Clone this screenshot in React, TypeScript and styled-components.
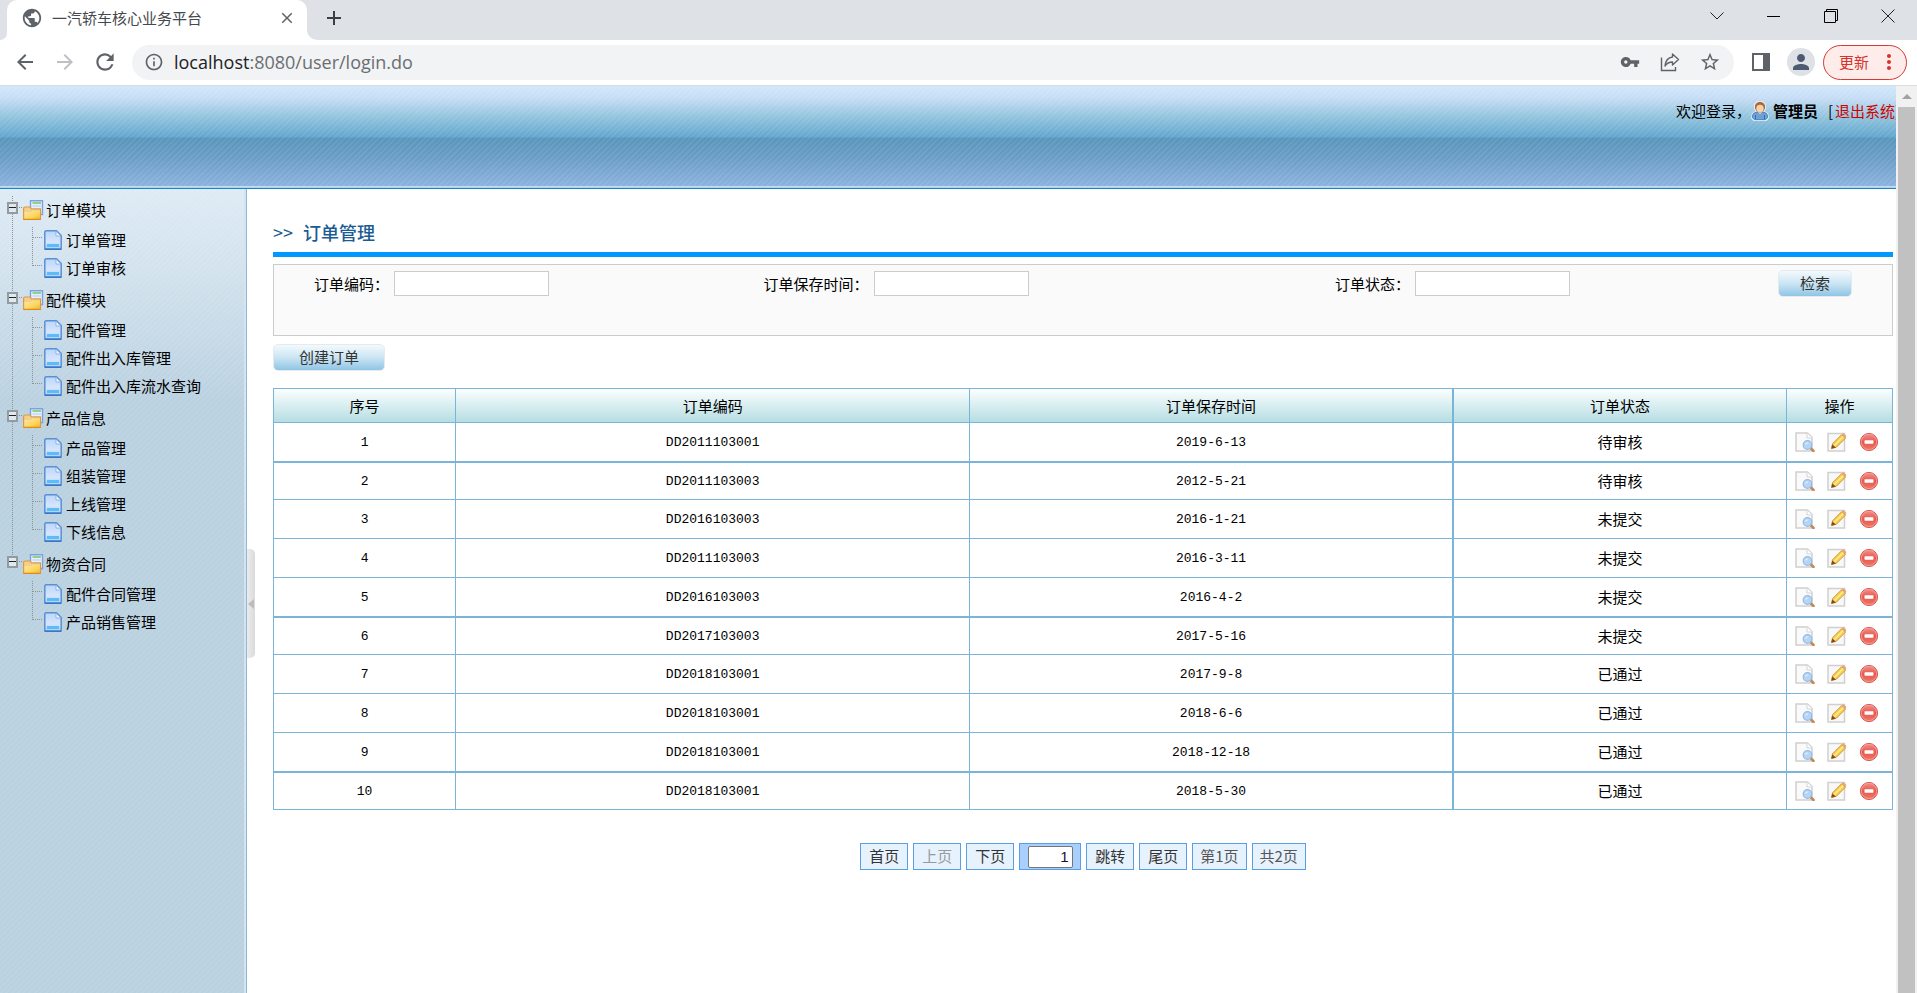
import React from 'react';
import styled, { createGlobalStyle } from 'styled-components';
import {
  MdAdd,
  MdArrowBack,
  MdArrowForward,
  MdClose,
  MdInfoOutline,
  MdMoreVert,
  MdPerson,
  MdPublic,
  MdRefresh,
  MdStarBorder,
  MdVpnKey,
} from 'react-icons/md';

const GlobalStyle = createGlobalStyle`
  *, *::before, *::after { box-sizing: border-box; }
  body {
    margin: 0;
    background: #fff;
    color: #000;
    font-family: "Noto Sans CJK SC", sans-serif;
    font-size: 15px;
    line-height: 20px;
  }
  button, input { font: inherit; color: inherit; }
  button { cursor: pointer; padding: 0; border: 0; background: none; }
  svg { display: block; flex: none; }
  ul { list-style: none; margin: 0; padding: 0; }
`;

const UI_FONT = '"Open Sans", "Noto Sans CJK SC", sans-serif';
const STRIPES =
  'repeating-linear-gradient(135deg, rgba(255,255,255,0.07) 0 2px, rgba(255,255,255,0) 2px 4px)';

/* ---------- browser window ---------- */

const Window = styled.div`
  height: 100vh;
  display: flex;
  flex-direction: column;
  overflow: hidden;
`;

const TabStrip = styled.div`
  display: flex;
  height: 40px;
  flex: none;
  background: #fff;
  font-family: ${UI_FONT};
`;

const StripEdge = styled.div`
  width: 7px;
  background: #dee1e6;
  border-bottom-right-radius: 7px;
`;

const TabHolder = styled.div`
  width: 300px;
  background: #dee1e6;
`;

const Tab = styled.div`
  display: flex;
  align-items: center;
  height: 40px;
  padding: 0 12px 4px 14px;
  gap: 9px;
  background: #fff;
  border-radius: 10px 10px 0 0;
  color: #45494d;
  svg { color: #5f6368; }
`;

const TabTitle = styled.span`
  flex: 1;
`;

const StripRest = styled.div`
  flex: 1;
  display: flex;
  align-items: center;
  justify-content: space-between;
  padding: 0 17px 4px 15px;
  background: #dee1e6;
  border-bottom-left-radius: 10px;
`;

const WindowButtons = styled.div`
  display: flex;
  gap: 33px;
  padding-bottom: 5px;
`;

const IconButton = styled.button<{ $size?: number }>`
  display: flex;
  align-items: center;
  justify-content: center;
  width: ${(p) => p.$size ?? 24}px;
  height: ${(p) => p.$size ?? 24}px;
  color: #3c4043;
`;

const Toolbar = styled.div`
  display: flex;
  align-items: center;
  flex: none;
  height: 46px;
  padding: 0 10px 1px 13px;
  border-bottom: 1px solid #dadce0;
  background: #fff;
  color: #5f6368;
  font-family: ${UI_FONT};
  ${IconButton} { color: #5f6368; }
  ${IconButton}:disabled { color: #bdc1c6; }
`;

const NavButtons = styled.div`
  display: flex;
  gap: 16px;
`;

const AddressBar = styled.div`
  flex: 1;
  display: flex;
  align-items: center;
  height: 35px;
  margin: 0 18px 0 15px;
  padding: 0 12px;
  border-radius: 18px;
  background: #f1f3f4;
`;

const Url = styled.span`
  flex: 1;
  margin-left: 10px;
  font-size: 18px;
  line-height: 24px;
  color: #6a6e72;
  b { font-weight: 400; color: #202124; }
`;

const AddressActions = styled.div`
  display: flex;
  gap: 16px;
`;

const Avatar = styled.button`
  display: flex;
  align-items: center;
  justify-content: center;
  width: 28px;
  height: 28px;
  margin: 0 8px 0 17px;
  border-radius: 50%;
  background: #dee1e6;
  color: #4d5b72;
`;

const UpdateButton = styled.button`
  display: flex;
  align-items: center;
  gap: 8px;
  height: 35px;
  width: 84px;
  padding-left: 15px;
  border: 1px solid #d33a33;
  border-radius: 18px;
  background: #fdecea;
  color: #d6332b;
`;

const Viewport = styled.div`
  flex: 1;
  display: flex;
  min-height: 0;
`;

const Page = styled.div`
  flex: 1;
  min-width: 0;
  display: flex;
  flex-direction: column;
`;

const Scrollbar = styled.div`
  width: 21px;
  padding: 0 2px;
  display: flex;
  flex-direction: column;
  background: #f1f1f1;
`;

const ScrollArrow = styled.div`
  height: 21px;
  display: flex;
  align-items: center;
  justify-content: center;
`;

const ScrollThumb = styled.div`
  flex: 1;
  background: #c1c1c1;
`;

/* ---------- application frame ---------- */

const Banner = styled.header`
  flex: none;
  height: 103px;
  border-bottom: 1px solid #1d84c6;
  background:
    linear-gradient(#cfe3ee, #a5cdea) bottom / 100% 2px no-repeat,
    ${STRIPES},
    linear-gradient(#cfe8fa 0, #c6ddf5 12px, #8fc2dc 32px, #62a6cf 51px, #5895bb 52px, #6a9dc5 72px, #8bb2de 100px);
  overflow: hidden;
`;

const UserInfo = styled.div`
  width: 220px;
  margin-left: auto;
  padding-top: 15px;
  display: flex;
  align-items: center;
  white-space: nowrap;
  svg { margin-right: 4px; }
`;

const Logout = styled.a`
  color: #d00000;
  text-decoration: none;
`;

const Bracket = styled.span`
  margin: 0 2px 0 10px;
`;

const Body = styled.div`
  flex: 1;
  display: flex;
  min-height: 0;
`;

const Sidebar = styled.nav`
  width: 247px;
  flex: none;
  padding-top: 7px;
  border-right: 1px solid #8fb8da;
  background:
    linear-gradient(#d3e3ef, #d3e3ef) right / 2px 100% no-repeat,
    ${STRIPES},
    linear-gradient(#deebf5 0, #cfe0ec 100px, #bad1e0 210px, #bad1e0 100%);
`;

const DOTS_V = 'repeating-linear-gradient(#8c949a 0 1px, transparent 1px 2px)';
const DOTS_H = 'repeating-linear-gradient(90deg, #8c949a 0 1px, transparent 1px 2px)';

const Group = styled.li`
  padding: 3px 0 3px;
  background: ${DOTS_V} 12px 0 / 1px 100% no-repeat;
  &:last-child { background-size: 1px 12px; }
`;

const GroupHeader = styled.div`
  display: flex;
  align-items: center;
  height: 22px;
  margin-bottom: 6px;
  padding-left: 7px;
`;

const Toggle = styled.button`
  width: 11px;
  height: 12px;
  margin-bottom: 5px;
  display: flex;
  align-items: center;
  justify-content: center;
  border: 2px solid #939ba1;
  background: #dfe9f0;
  &::before { content: ""; width: 7px; height: 1px; flex: none; background: #222; }
`;

const Stub = styled.span`
  width: 4px;
  height: 1px;
  margin: 0 0 5px 1px;
  background: ${DOTS_H};
`;

const GroupName = styled.span`
  margin-left: 2px;
`;

const Leaf = styled.li`
  display: flex;
  height: 28px;
  padding: 3px 0 0 44px;
  background:
    ${DOTS_V} 32px 0 / 1px 100% no-repeat,
    ${DOTS_H} 33px 10px / 10px 1px no-repeat;
  &:last-child {
    background-size: 1px 11px, 10px 1px;
  }
`;

const LeafLink = styled.a`
  display: flex;
  align-items: center;
  gap: 4px;
  height: 20px;
  color: #000;
  text-decoration: none;
`;

const SplitHandle = styled.button`
  align-self: flex-start;
  flex: none;
  width: 8px;
  height: 109px;
  margin-top: 360px;
  display: flex;
  align-items: center;
  border-radius: 0 5px 5px 0;
  background: linear-gradient(90deg, #ececec, #dadada);
`;

/* ---------- orders page ---------- */

const Main = styled.main`
  flex: 1;
  min-width: 0;
  padding: 31px 3px 0 18px;
`;

const Title = styled.h1`
  display: flex;
  align-items: center;
  gap: 10px;
  margin: 0;
  padding-bottom: 8px;
  height: 37px;
  border-bottom: 5px solid #0099ff;
  color: #1a5b93;
  font-size: 18px;
  font-weight: 500;
  line-height: 24px;
  span { font-weight: 400; }
`;

const SearchForm = styled.form`
  display: grid;
  grid-template-columns: 315fr 614fr 499fr 190fr;
  align-items: start;
  justify-items: center;
  height: 72px;
  margin-top: 7px;
  padding-top: 5px;
  border: 1px solid #ccc;
  background: #fafafa;
`;

const Field = styled.label`
  display: flex;
  align-items: center;
  gap: 5px;
  padding-top: 1px;
  white-space: nowrap;
`;

const FieldInput = styled.input`
  width: 155px;
  height: 25px;
  padding: 0 4px;
  border: 1px solid #ccc;
  background: #fff;
`;

const GlossyButton = styled.button<{ $width: number }>`
  display: block;
  width: ${(p) => p.$width}px;
  height: 27px;
  padding-bottom: 2px;
  border: 1px solid #e4ebef;
  border-radius: 5px;
  background: linear-gradient(#f3fafd 0, #cbe5f3 50%, #8fc5e5 100%);
  color: #333;
`;

const SearchCell = styled.div`
  justify-self: end;
  margin-right: 40px;
`;

const Actions = styled.div`
  margin: 8px 0 17px;
`;

const OrderTable = styled.table`
  width: 100%;
  table-layout: fixed;
  border-collapse: collapse;
  text-align: center;
  th, td { padding: 0; border: 1px solid #7ab5d9; }
  th:nth-child(4), td:nth-child(4) { border-left-width: 2px; }
`;

const HeadRow = styled.tr`
  height: 34px;
  background: linear-gradient(#fcfefe, #b3dde2);
  th { font-weight: 400; }
`;

const OrderRow = styled.tr`
  height: 39px;
  &:nth-child(4n + 2) { height: 38px; }
  &:nth-child(4n + 1) td { border-bottom-width: 2px; }
`;

const CodeCell = styled.td`
  && { padding-top: 2px; }
  font-family: "Liberation Mono", monospace;
  font-size: 13px;
`;

const RowActions = styled.div`
  display: flex;
  justify-content: center;
  gap: 12px;
  padding-right: 5px;
`;

const Pager = styled.div`
  display: flex;
  justify-content: center;
  gap: 5px;
  margin-top: 33px;
`;

const pagerBox = `
  height: 27px;
  border: 1px solid #5b9fe3;
  background: #e6f2fe;
`;

const PageButton = styled.button`
  ${pagerBox}
  width: 48px;
  padding-bottom: 1px;
  color: #333;
  &:disabled { color: #999; }
`;

const PageInfo = styled.span`
  ${pagerBox}
  display: flex;
  align-items: center;
  padding: 0 7px 1px;
  color: #555;
`;

const PageJump = styled.label`
  ${pagerBox}
  display: flex;
  align-items: center;
  justify-content: center;
  width: 62px;
  background: #a9d0fd;
`;

const PageInput = styled.input`
  width: 45px;
  height: 22px;
  padding: 0 3px;
  border: 1px solid #767676;
  border-radius: 2px;
  background: #fff;
  text-align: right;
  font-family: "Liberation Sans", sans-serif;
  color: #1a1040;
`;

/* ---------- drawings ---------- */

const ShareIcon = () => (
  <svg width="20" height="20" viewBox="0 0 20 20" fill="none" stroke="#5f6368" strokeWidth="1.4">
    <path d="M1.5 5.5V18.500H15.500V15" />
    <path d="M12.500 2 18.500 7.500 12.500 13V10C9 10 7 11 5 14 5.500 9 8 5.500 12.500 5Z" strokeLinejoin="round" />
  </svg>
);

const PanelIcon = () => (
  <svg width="18" height="18" viewBox="0 0 18 18">
    <path fill="#5f6368" fillRule="evenodd" d="M0 0H18V18H0ZM2 2V16H11V2Z" />
  </svg>
);

const FolderIcon = () => (
  <svg width="21" height="21" viewBox="0 0 21 21">
    <defs>
      <linearGradient id="folderFill" x1="0" y1="0" x2="1" y2="1">
        <stop offset="0" stopColor="#fbe7b0" />
        <stop offset="0.6" stopColor="#fbd75a" />
        <stop offset="1" stopColor="#f0b63e" />
      </linearGradient>
    </defs>
    <path d="M7.500 0.700H19.500V14.500H7.500Z" fill="#e8f0fd" stroke="#7aa2e2" strokeWidth="1.400" />
    <path d="M9.500 3H18" stroke="#8fd08a" strokeWidth="2" />
    <path d="M9.500 6H18M9.500 8.500H18" stroke="#b9cdea" />
    <path d="M0.600 8.500Q0.600 7 2 7H7L8.500 9H17.500V19.400H0.600Z" fill="#f5cf8a" stroke="#df9a3c" strokeWidth="1.200" />
    <path d="M1.500 12H8L9.500 10.500H17V19H1.500Z" fill="url(#folderFill)" />
    <path d="M0.600 19.400H17.500" stroke="#e08a22" strokeWidth="1.300" />
  </svg>
);

const FileIcon = () => (
  <svg width="18" height="20" viewBox="0 0 18 20">
    <defs>
      <linearGradient id="fileFill" x1="0" y1="0" x2="0" y2="1">
        <stop offset="0" stopColor="#bcd6fa" />
        <stop offset="0.600" stopColor="#d6e5fd" />
        <stop offset="1" stopColor="#a9d2fb" />
      </linearGradient>
    </defs>
    <path d="M1.800 0.800H12.500L17.200 5.500V19.200H0.800V1.800Z" fill="url(#fileFill)" stroke="#5a90d6" strokeWidth="1.500" strokeLinejoin="round" />
    <path d="M12 1.200V6H16.800Z" fill="#f3f8ff" stroke="#7ba6e0" strokeWidth="0.800" />
    <path d="M3 15.500H15" stroke="#5bbcf8" strokeWidth="3" />
    <path d="M1 19.200H17" stroke="#3a74c6" strokeWidth="1.500" />
  </svg>
);

const UserIcon = () => (
  <svg width="18" height="20" viewBox="0 0 18 20">
    <path d="M9 0C13.500 0 15.200 3 15 6.500 14.800 8.500 14 9.500 13.500 10.300 16.500 11.500 18 13.500 18 17L15.500 20H2.500L0 17C0 13.500 1.500 11.500 4.500 10.300 4 9.500 3.200 8.500 3 6.500 2.800 3 4.500 0 9 0Z" fill="#eef5fb" />
    <path d="M1.200 16.500Q1.200 11.500 6 11H12Q16.800 11.500 16.800 16.500L14.500 18.700H3.500Z" fill="#6ba0d8" stroke="#2f66a8" strokeWidth="0.700" />
    <path d="M4.500 14V18.300M13.500 14V18.300" stroke="#376fb2" />
    <path d="M6.500 10.500H11.500L9 13.500Z" fill="#f0c49b" />
    <circle cx="9" cy="6" r="5.200" fill="#a9683a" />
    <ellipse cx="9" cy="7.400" rx="3.700" ry="3.700" fill="#f6d2ad" />
  </svg>
);

const ViewIcon = () => (
  <svg width="20" height="20" viewBox="0 0 20 20">
    <path d="M1 1H12.500L17 5.500V19H1Z" fill="#fafafa" stroke="#cfcfcf" strokeWidth="1.500" />
    <path d="M12 1V6H17" fill="#fff" stroke="#d4d4d4" />
    <path d="M15.500 16 18.500 19" stroke="#c18a56" strokeWidth="2.600" strokeLinecap="round" />
    <circle cx="12.500" cy="13" r="4.300" fill="#b4d5f5" stroke="#95bbe6" strokeWidth="1.200" />
    <path d="M10.500 12.500Q11 11 12.800 10.800" fill="none" stroke="#e0effc" strokeWidth="1.200" />
  </svg>
);

const EditIcon = () => (
  <svg width="20" height="20" viewBox="0 0 20 20">
    <path d="M1 1.500H17.500V19H1Z" fill="#f8f8f8" stroke="#d0d0d0" strokeWidth="1.500" />
    <path d="M4.500 16.500 5.500 11.800 14.500 2.800 18.300 6.300 9.300 15.300Z" fill="#f9d04c" stroke="#c98d2a" strokeWidth="0.900" />
    <path d="M7.300 13.600 16.300 4.500" stroke="#fff0a0" strokeWidth="1.200" />
    <path d="M14.500 2.800 15.500 1.700Q16.300 1 17.200 1.700L19 3.600Q19.600 4.400 19 5.200L18.300 6.300Z" fill="#e8a678" />
    <path d="M4.300 16.800 5.300 12.500 8.800 15.500Z" fill="#7a4a2a" />
  </svg>
);

const DeleteIcon = () => (
  <svg width="20" height="20" viewBox="0 0 20 20">
    <defs>
      <linearGradient id="deleteFill" x1="0" y1="0" x2="0" y2="1">
        <stop offset="0" stopColor="#f0938c" />
        <stop offset="0.500" stopColor="#e8564e" />
        <stop offset="1" stopColor="#ee7a68" />
      </linearGradient>
    </defs>
    <circle cx="10" cy="10" r="8.600" fill="url(#deleteFill)" stroke="#dd5a52" />
    <circle cx="10" cy="10" r="7.600" fill="none" stroke="#f6aaa3" strokeWidth="0.700" />
    <rect x="5.500" y="8.300" width="9" height="3.400" rx="0.600" fill="#fff" />
  </svg>
);

/* ---------- data ---------- */

const MENU = [
  { name: '订单模块', items: ['订单管理', '订单审核'] },
  { name: '配件模块', items: ['配件管理', '配件出入库管理', '配件出入库流水查询'] },
  { name: '产品信息', items: ['产品管理', '组装管理', '上线管理', '下线信息'] },
  { name: '物资合同', items: ['配件合同管理', '产品销售管理'] },
];

const ORDERS = [
  ['DD2011103001', '2019-6-13', '待审核'],
  ['DD2011103003', '2012-5-21', '待审核'],
  ['DD2016103003', '2016-1-21', '未提交'],
  ['DD2011103003', '2016-3-11', '未提交'],
  ['DD2016103003', '2016-4-2', '未提交'],
  ['DD2017103003', '2017-5-16', '未提交'],
  ['DD2018103001', '2017-9-8', '已通过'],
  ['DD2018103001', '2018-6-6', '已通过'],
  ['DD2018103001', '2018-12-18', '已通过'],
  ['DD2018103001', '2018-5-30', '已通过'],
];

const BrowserChrome = () => (
  <>
    <TabStrip>
      <StripEdge />
      <TabHolder>
        <Tab>
          <MdPublic size={22} />
          <TabTitle>一汽轿车核心业务平台</TabTitle>
          <IconButton $size={16} aria-label="关闭标签页"><MdClose size={18} /></IconButton>
        </Tab>
      </TabHolder>
      <StripRest>
        <IconButton aria-label="新标签页"><MdAdd size={24} /></IconButton>
        <WindowButtons>
          <IconButton aria-label="搜索标签页">
            <svg width="14" height="14" viewBox="0 0 14 14" fill="none" stroke="#222"><path d="M0.500 3.500 7 10 13.500 3.500" /></svg>
          </IconButton>
          <IconButton aria-label="最小化">
            <svg width="14" height="14" viewBox="0 0 14 14" fill="none" stroke="#000"><path d="M0 7.500H13" /></svg>
          </IconButton>
          <IconButton aria-label="还原">
            <svg width="14" height="14" viewBox="0 0 14 14" fill="none" stroke="#000"><path d="M0.500 2.500H11.500V13.500H0.500ZM2.500 2.500V0.500H13.500V11.500H11.500" /></svg>
          </IconButton>
          <IconButton aria-label="关闭">
            <svg width="14" height="14" viewBox="0 0 14 14" fill="none" stroke="#222"><path d="M0.500 0.500 13.500 13.500M13.500 0.500 0.500 13.500" /></svg>
          </IconButton>
        </WindowButtons>
      </StripRest>
    </TabStrip>
    <Toolbar>
      <NavButtons>
        <IconButton aria-label="后退"><MdArrowBack size={24} /></IconButton>
        <IconButton aria-label="前进" disabled><MdArrowForward size={24} /></IconButton>
        <IconButton aria-label="刷新"><MdRefresh size={26} /></IconButton>
      </NavButtons>
      <AddressBar>
        <MdInfoOutline size={20} />
        <Url><b>localhost</b>:8080/user/login.do</Url>
        <AddressActions>
          <IconButton aria-label="密码"><MdVpnKey size={20} /></IconButton>
          <IconButton aria-label="分享"><ShareIcon /></IconButton>
          <IconButton aria-label="收藏"><MdStarBorder size={22} /></IconButton>
        </AddressActions>
      </AddressBar>
      <IconButton $size={18} aria-label="侧边栏"><PanelIcon /></IconButton>
      <Avatar aria-label="用户"><MdPerson size={24} /></Avatar>
      <UpdateButton>更新<MdMoreVert size={24} /></UpdateButton>
    </Toolbar>
  </>
);

const Tree = () => (
  <Sidebar>
    <ul>
      {MENU.map((group) => (
        <Group key={group.name}>
          <GroupHeader>
            <Toggle aria-label={`折叠${group.name}`} />
            <Stub />
            <FolderIcon />
            <GroupName>{group.name}</GroupName>
          </GroupHeader>
          <ul>
            {group.items.map((item) => (
              <Leaf key={item}>
                <LeafLink href="#"><FileIcon />{item}</LeafLink>
              </Leaf>
            ))}
          </ul>
        </Group>
      ))}
    </ul>
  </Sidebar>
);

const Orders = () => (
  <Main>
    <Title><span>&gt;&gt;</span>订单管理</Title>
    <SearchForm>
      <Field>订单编码：<FieldInput /></Field>
      <Field>订单保存时间：<FieldInput /></Field>
      <Field>订单状态：<FieldInput /></Field>
      <SearchCell><GlossyButton type="button" $width={74}>检索</GlossyButton></SearchCell>
    </SearchForm>
    <Actions><GlossyButton $width={112}>创建订单</GlossyButton></Actions>
    <OrderTable>
      <colgroup>
        <col width="11.25%" />
        <col width="31.75%" />
        <col width="29.85%" />
        <col />
        <col width="106" />
      </colgroup>
      <thead>
        <HeadRow>
          <th>序号</th>
          <th>订单编码</th>
          <th>订单保存时间</th>
          <th>订单状态</th>
          <th>操作</th>
        </HeadRow>
      </thead>
      <tbody>
        {ORDERS.map(([code, date, status], i) => (
          <OrderRow key={i}>
            <CodeCell>{i + 1}</CodeCell>
            <CodeCell>{code}</CodeCell>
            <CodeCell>{date}</CodeCell>
            <td>{status}</td>
            <td>
              <RowActions>
                <IconButton $size={20} aria-label="查看"><ViewIcon /></IconButton>
                <IconButton $size={20} aria-label="编辑"><EditIcon /></IconButton>
                <IconButton $size={20} aria-label="删除"><DeleteIcon /></IconButton>
              </RowActions>
            </td>
          </OrderRow>
        ))}
      </tbody>
    </OrderTable>
    <Pager>
      <PageButton>首页</PageButton>
      <PageButton disabled>上页</PageButton>
      <PageButton>下页</PageButton>
      <PageJump><PageInput aria-label="页码" defaultValue="1" /></PageJump>
      <PageButton>跳转</PageButton>
      <PageButton>尾页</PageButton>
      <PageInfo>第1页</PageInfo>
      <PageInfo>共2页</PageInfo>
    </Pager>
  </Main>
);

export default function App() {
  return (
    <>
      <GlobalStyle />
      <Window>
        <BrowserChrome />
        <Viewport>
          <Page>
            <Banner>
              <UserInfo>
                欢迎登录，<UserIcon /><strong>管理员</strong>
                <Bracket>[</Bracket><Logout href="#">退出系统</Logout>]
              </UserInfo>
            </Banner>
            <Body>
              <Tree />
              <SplitHandle aria-label="收起菜单">
                <svg width="8" height="10" viewBox="0 0 8 10"><path d="M1 5 7 0V10Z" fill="#bdbdbd" /></svg>
              </SplitHandle>
              <Orders />
            </Body>
          </Page>
          <Scrollbar>
            <ScrollArrow>
              <svg width="10" height="5" viewBox="0 0 10 5"><path d="M0 5 5 0 10 5Z" fill="#a3a3a3" /></svg>
            </ScrollArrow>
            <ScrollThumb />
          </Scrollbar>
        </Viewport>
      </Window>
    </>
  );
}
